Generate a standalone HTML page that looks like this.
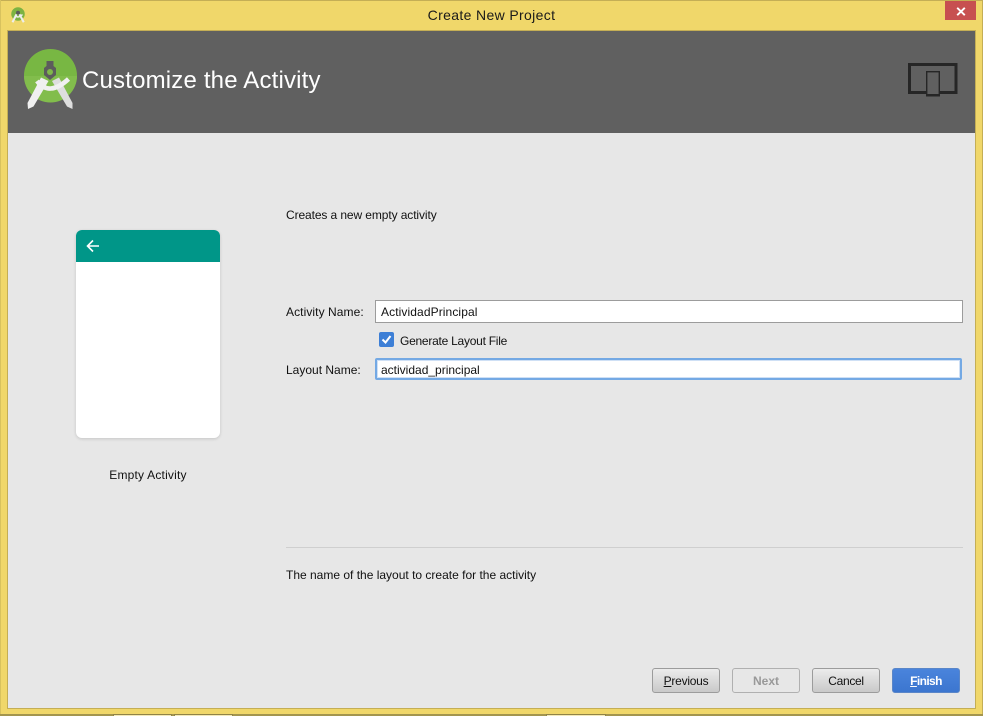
<!DOCTYPE html>
<html>
<head>
<meta charset="utf-8">
<style>
html,body{margin:0;padding:0;background:#f0d76a;}
body{width:983px;height:716px;position:relative;overflow:hidden;font-family:"Liberation Sans",sans-serif;font-size:12px;color:#111;}
.a{position:absolute;white-space:nowrap;}
.t{line-height:14px;}
.btn{position:absolute;top:668px;width:66px;height:23px;border:1px solid #9c9c9c;border-radius:3px;background:linear-gradient(#ececec,#c9c9c9);text-align:center;line-height:24px;}
.inp{position:absolute;background:#fff;box-sizing:border-box;}
.tab{position:absolute;top:714px;width:59px;height:2px;box-sizing:border-box;background:#f3e9b8;border:1px solid #8f8348;border-bottom:0;}
</style>
</head>
<body>
<div class="a" style="left:0;top:0;width:983px;height:1px;background:#c4ae55"></div>
<div class="a" style="left:0;top:0;width:1px;height:716px;background:#d8c25e"></div>
<div class="a" style="left:982px;top:0;width:1px;height:716px;background:#c4ae55"></div>

<svg class="a" style="left:11px;top:7px" width="14" height="16" viewBox="0 0 56 64">
<circle cx="28" cy="28" r="27" fill="#7cb342"/>
<circle cx="28" cy="23" r="8" fill="#5b5b5b"/>
<path d="M22 29L6 61M34 29L51 61" stroke="#eee" stroke-width="8" fill="none"/>
<path d="M16 33Q28 48 46 30" stroke="#eee" stroke-width="6" fill="none"/>
</svg>
<div class="a t" style="left:0;width:983px;top:7px;text-align:center;font-size:14px;line-height:16px;color:#1a1a1a;letter-spacing:.35px">Create New Project</div>

<div class="a" style="left:945px;top:1px;width:31px;height:19px;background:#c75050"></div>
<svg class="a" style="left:956px;top:7px" width="10" height="9" viewBox="0 0 10 9">
<path d="M1.200 .8L8.800 8.200M8.800 .8L1.200 8.200" stroke="#fff" stroke-width="1.900"/>
</svg>

<div class="a" style="left:7px;top:30px;width:969px;height:679px;background:#c4ae55"></div>
<div class="a" style="left:8px;top:31px;width:967px;height:677px;background:#e7e7e7"></div>
<div class="a" style="left:8px;top:31px;width:967px;height:102px;background:#606060"></div>

<svg class="a" style="left:22px;top:48px" width="56" height="62" viewBox="0 0 56 62">
<circle cx="28.500" cy="27.500" r="26.500" fill="#78b743"/>
<path d="M2 28a26.500 26.500 0 0 0 53 0z" fill="#82bd4c"/>
<path d="M24.500 13h7v5l2.500 2v7l-6 5-6-5v-7l2.500-2z" fill="#5c5c5c"/>
<circle cx="28" cy="24" r="3" fill="#7fb84a"/>
<path d="M19 29.500L26.500 33L11.500 58.500L6 61L5.500 55z" fill="#f0f0f0"/>
<path d="M37 29.500L30 33L45 58.500L50.500 61L50.500 55z" fill="#dedede"/>
<path d="M15 33Q27 49 46.500 31" stroke="#f0f0f0" stroke-width="4.600" fill="none"/>
</svg>
<div class="a" style="left:82px;top:66px;font-size:24px;line-height:30px;color:#fff;letter-spacing:.18px">Customize the Activity</div>

<svg class="a" style="left:907px;top:61px" width="52" height="36" viewBox="0 0 52 36">
<path d="M19 31.500H2.500V3.500H49V31.500H33" fill="none" stroke="#262626" stroke-width="3"/>
<rect x="19.700" y="10.700" width="12.600" height="23.800" fill="#606060" stroke="#262626" stroke-width="1.400"/>
<rect x="19" y="33" width="14" height="2.500" fill="#262626"/>
</svg>

<div class="a" style="left:76px;top:230px;width:144px;height:208px;background:#fff;border-radius:6px;box-shadow:0 1px 3px rgba(0,0,0,.15);overflow:hidden">
<div style="height:32px;background:#009688"></div>
</div>
<svg class="a" style="left:85px;top:238px" width="16" height="16" viewBox="0 0 16 16">
<path d="M14 8H2.500M8 2.500L2.500 8L8 13.500" fill="none" stroke="#fff" stroke-width="1.600"/>
</svg>
<div class="a t" style="left:76px;width:144px;top:468px;text-align:center;letter-spacing:.2px">Empty Activity</div>

<div class="a t" style="left:286px;top:208px;letter-spacing:-.1px">Creates a new empty activity</div>

<div class="a t" style="left:286px;top:305px;letter-spacing:.08px">Activity Name:</div>
<div class="inp" style="left:375px;top:300px;width:588px;height:23px;border:1px solid #9c9c9c;padding-left:5px;line-height:22px;letter-spacing:.1px">ActividadPrincipal</div>

<div class="a" style="left:379px;top:332px;width:15px;height:15px;background:#3d7fd6;border-radius:2px"></div>
<svg class="a" style="left:379px;top:332px" width="15" height="15" viewBox="0 0 15 15">
<path d="M3.500 7.500L6.500 10.500L11.500 4" fill="none" stroke="#fff" stroke-width="2"/>
</svg>
<div class="a t" style="left:400px;top:334px;letter-spacing:-.25px">Generate Layout File</div>

<div class="a t" style="left:286px;top:363px">Layout Name:</div>
<div class="inp" style="left:375px;top:358px;width:587px;height:22px;border:2px solid #74a9e4;border-radius:2px;box-shadow:inset 0 0 0 1px #cfe0f5;padding-left:4px;line-height:20px">actividad_principal</div>

<div class="a" style="left:286px;top:547px;width:677px;height:1px;background:#cfcfcf"></div>
<div class="a t" style="left:286px;top:568px">The name of the layout to create for the activity</div>

<div class="btn" style="left:652px;letter-spacing:-.25px"><u>P</u>revious</div>
<div class="btn" style="left:732px;background:#e7e7e7;border-color:#b0b0b0;color:#999;font-weight:bold">Next</div>
<div class="btn" style="left:812px;letter-spacing:-.3px">Cancel</div>
<div class="btn" style="left:892px;background:linear-gradient(#4a84dc,#3c76cf);border-color:#5a86c8;color:#fff;font-weight:bold;letter-spacing:-.6px"><u>F</u>inish</div>

<div class="a" style="left:0;top:714px;width:983px;height:2px;background:#a3954e"></div>
<div class="tab" style="left:113px"></div>
<div class="tab" style="left:174px"></div>
<div class="tab" style="left:546px;width:60px"></div>
</body>
</html>
